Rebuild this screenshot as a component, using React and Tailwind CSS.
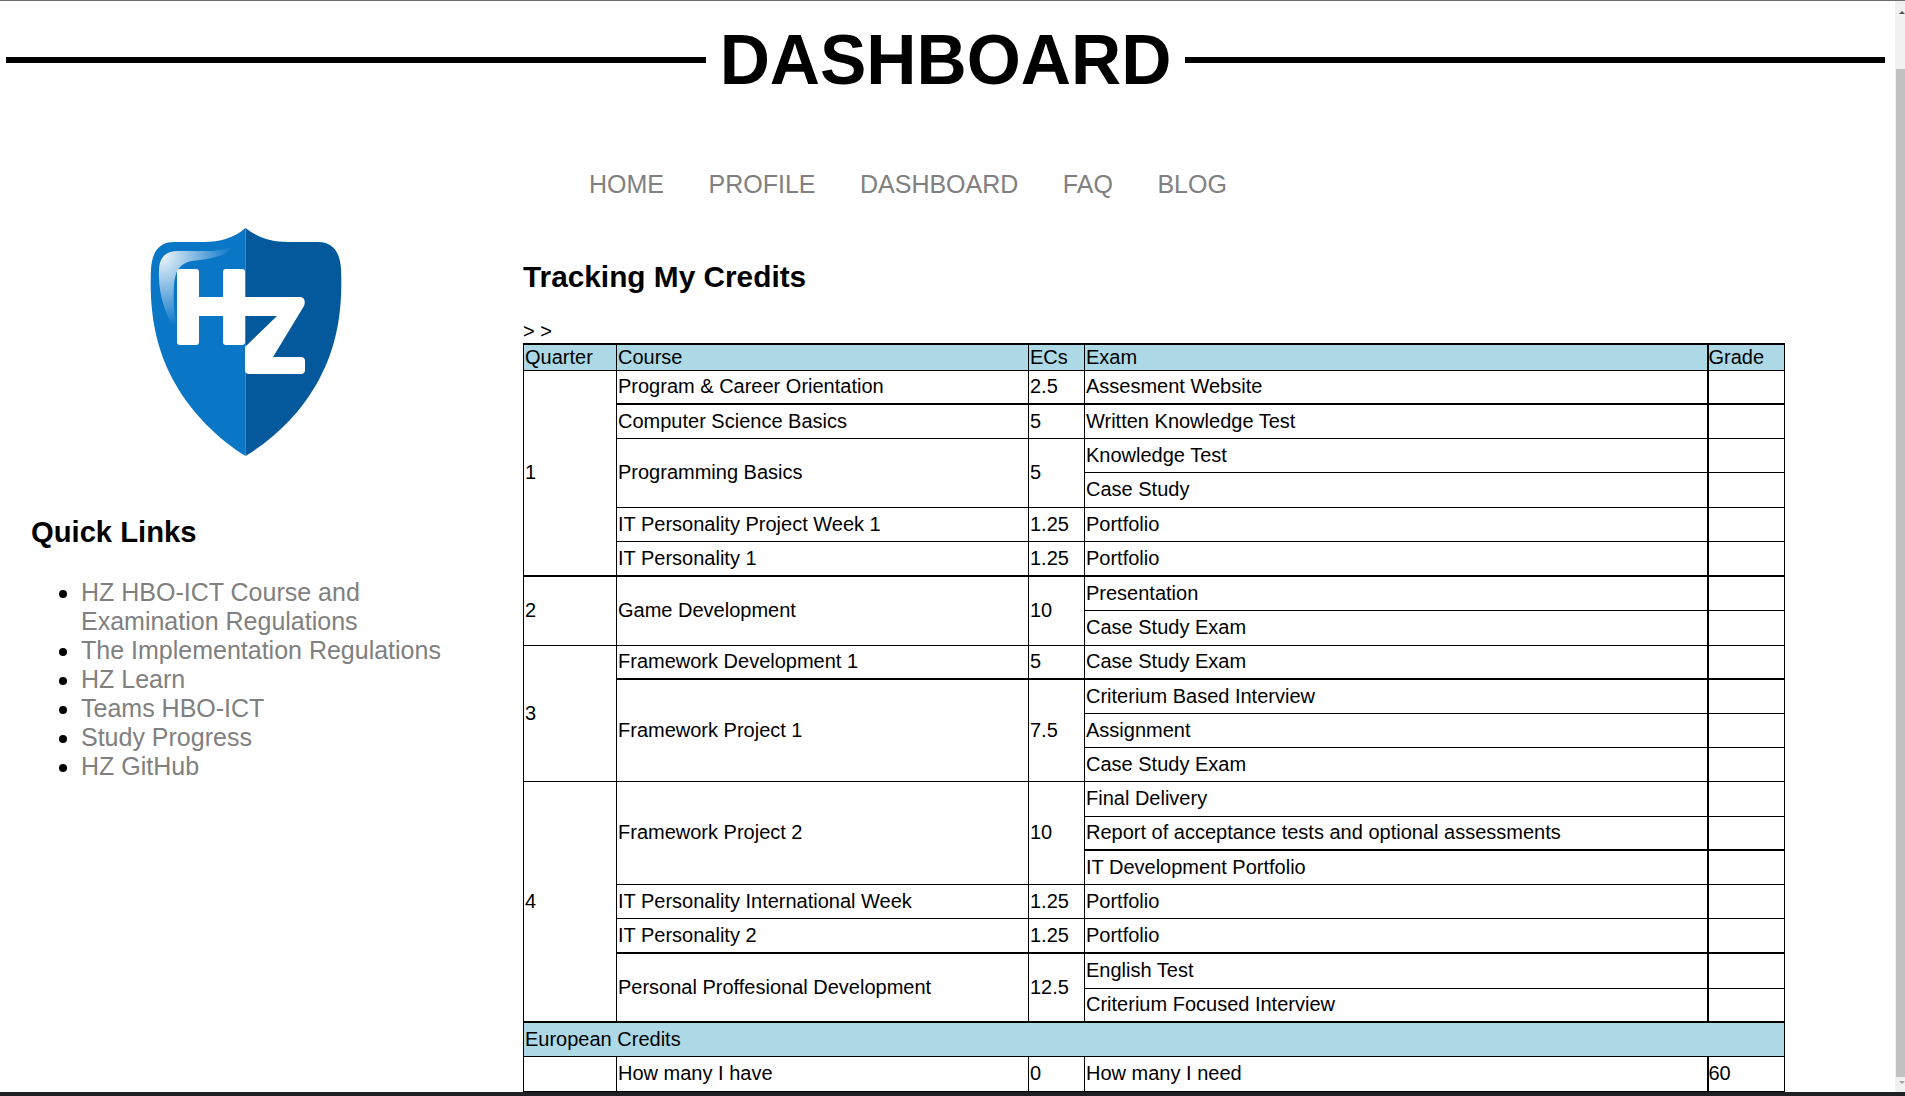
const columns = ['Quarter', 'Course', 'ECs', 'Exam', 'Grade'];

// one entry per table row; quarter/course/ecs only on the row where their rowSpan starts
const rows = [
  { h: 34, quarter: '1', qSpan: 6, course: 'Program & Career Orientation', ecs: '2.5', exam: 'Assesment Website', thick: true },
  { h: 34, course: 'Computer Science Basics', ecs: '5', exam: 'Written Knowledge Test' },
  { h: 34, course: 'Programming Basics', cSpan: 2, ecs: '5', exam: 'Knowledge Test' },
  { h: 35, exam: 'Case Study' },
  { h: 34, course: 'IT Personality Project Week 1', ecs: '1.25', exam: 'Portfolio' },
  { h: 35, course: 'IT Personality 1', ecs: '1.25', exam: 'Portfolio', thick: true },
  { h: 34, quarter: '2', qSpan: 2, course: 'Game Development', cSpan: 2, ecs: '10', exam: 'Presentation' },
  { h: 35, exam: 'Case Study Exam' },
  { h: 34, quarter: '3', qSpan: 4, course: 'Framework Development 1', ecs: '5', exam: 'Case Study Exam', thick: true },
  { h: 34, course: 'Framework Project 1', cSpan: 3, ecs: '7.5', exam: 'Criterium Based Interview' },
  { h: 34, exam: 'Assignment' },
  { h: 34, exam: 'Case Study Exam' },
  { h: 35, quarter: '4', qSpan: 7, course: 'Framework Project 2', cSpan: 3, ecs: '10', exam: 'Final Delivery' },
  { h: 34, exam: 'Report of acceptance tests and optional assessments', thick: true },
  { h: 34, exam: 'IT Development Portfolio' },
  { h: 34, course: 'IT Personality International Week', ecs: '1.25', exam: 'Portfolio' },
  { h: 35, course: 'IT Personality 2', ecs: '1.25', exam: 'Portfolio', thick: true },
  { h: 35, course: 'Personal Proffesional Development', cSpan: 2, ecs: '12.5', exam: 'English Test' },
  { h: 34, exam: 'Criterium Focused Interview', thick: true },
];

const quickLinks = [
  'HZ HBO-ICT Course and Examination Regulations',
  'The Implementation Regulations',
  'HZ Learn',
  'Teams HBO-ICT',
  'Study Progress',
  'HZ GitHub',
];

const navItems = ['HOME', 'PROFILE', 'DASHBOARD', 'FAQ', 'BLOG'];

function Logo() {
  return (
    <svg width="192" height="230" viewBox="0 0 192 230">
      <defs>
        <radialGradient id="gloss" gradientUnits="userSpaceOnUse" cx="10" cy="28" r="72">
          <stop offset="0" stopColor="#ffffff" stopOpacity="0.95" />
          <stop offset="1" stopColor="#ffffff" stopOpacity="0" />
        </radialGradient>
      </defs>
      <path d="M95.5 1C84 11 70 15 54 15H24C10 15 2 24 1 42C-1 86 6 124 26 158C42 186 68 212 95.5 229Z" fill="#0a76c6" />
      <path d="M95.5 1C108 11 122 15 138 15H168C182 15 190 24 191 42C193 86 186 124 166 158C150 186 124 212 95.5 229Z" fill="#03599b" />
      <path d="M9 44C9 31 15 24 28 24H58C70 24 78 22 88 15C78 30 60 32 42 34C30 36 25 44 24 58C23 76 24 90 30 110C16 92 8 68 9 44Z" fill="url(#gloss)" />
      <rect x="27" y="42" width="22" height="76" rx="3" fill="#ffffff" />
      <rect x="73" y="42" width="22" height="76" rx="3" fill="#ffffff" />
      <rect x="45" y="70" width="50" height="19" fill="#ffffff" />
      <path d="M93 70H150C154 70 156 74 154 79L123 130H151C154 130 155 132 155 134V143C155 145 154 147 151 147H99C96 147 95 145 95 143V120L127 89H93Z" fill="#ffffff" />
    </svg>
  );
}

function Cell({ children, thick, rowSpan, colSpan, className = '' }) {
  return (
    <td
      rowSpan={rowSpan}
      colSpan={colSpan}
      className={`border-x border-t border-black px-px py-0 align-middle ${thick ? 'border-b-2' : 'border-b'} ${className}`}
    >
      {children}
    </td>
  );
}

export default function App() {
  return (
    <div className="flex h-screen flex-col overflow-hidden bg-white font-['Liberation_Sans',Arial,sans-serif] text-black">
      <div className="h-px shrink-0 bg-[#6b6b6b]" />
      <div className="flex min-h-0 flex-1">
        <div className="min-w-0 flex-1 overflow-hidden">
          <header className="flex items-center pl-[6px] pr-[10px] pt-[16px]">
            <div className="h-[6px] flex-1 bg-black" />
            <h1 className="px-[14px] text-[69.5px] font-bold leading-[86px]">DASHBOARD</h1>
            <div className="h-[6px] flex-1 bg-black" />
          </header>

          <nav className="mt-[67px] flex gap-[44.5px] pl-[589px] text-[25px] leading-[28px] text-[#808080]">
            {navItems.map((item) => (
              <a key={item}>{item}</a>
            ))}
          </nav>

          <div className="flex">
            <aside className="w-[523px] shrink-0 pl-[31px] pr-[60px] pt-[29px]">
              <div className="flex pl-[119px]">
                <Logo />
              </div>
              <h2 className="mt-[58px] text-[29.2px] font-bold leading-[34px]">Quick Links</h2>
              <ul className="mt-[29px] list-disc pl-[50px] text-[25px] leading-[29px] text-[#808080] marker:text-black">
                {quickLinks.map((link) => (
                  <li key={link}>{link}</li>
                ))}
              </ul>
            </aside>

            <main className="w-[1261px] shrink-0 pt-[62px]">
              <h2 className="text-[29.8px] font-bold leading-[34px]">Tracking My Credits</h2>
              <p className="mt-[25px] text-[20px] leading-[24px]">&gt; &gt;</p>
              <table className="w-[1261px] table-fixed border-collapse text-[20px] leading-[23px]">
                <colgroup>
                  <col className="w-[93px]" />
                  <col className="w-[412px]" />
                  <col className="w-[56px]" />
                  <col className="w-[623px]" />
                  <col className="w-[77px]" />
                </colgroup>
                <thead>
                  <tr className="h-[26px] bg-[#add8e6]">
                    {columns.map((col) => (
                      <th
                        key={col}
                        className={`border border-t-2 border-black px-px py-0 text-left font-normal ${col === 'Grade' ? 'border-l-2 pl-0' : ''}`}
                      >
                        {col}
                      </th>
                    ))}
                  </tr>
                </thead>
                <tbody>
                  {rows.map((row, i) => {
                    const spanThick = (span) => rows[i + (span || 1) - 1].thick;
                    return (
                      <tr key={i} style={{ height: row.h }}>
                        {row.quarter && (
                          <Cell rowSpan={row.qSpan} thick={spanThick(row.qSpan)}>{row.quarter}</Cell>
                        )}
                        {row.course && (
                          <Cell rowSpan={row.cSpan} thick={spanThick(row.cSpan)}>{row.course}</Cell>
                        )}
                        {row.ecs && (
                          <Cell rowSpan={row.cSpan} thick={spanThick(row.cSpan)}>{row.ecs}</Cell>
                        )}
                        <Cell thick={row.thick}>{row.exam}</Cell>
                        <Cell thick={row.thick} className="border-l-2" />
                      </tr>
                    );
                  })}
                  <tr className="h-[34px] bg-[#add8e6]">
                    <td colSpan={5} className="border border-t-2 border-black px-px py-0">European Credits</td>
                  </tr>
                  <tr className="h-[35px]">
                    <td className="border border-black px-px py-0" />
                    <td className="border border-black px-px py-0">How many I have</td>
                    <td className="border border-black px-px py-0">0</td>
                    <td className="border border-black px-px py-0">How many I need</td>
                    <td className="border border-l-2 border-black py-0 pl-0 pr-px">60</td>
                  </tr>
                </tbody>
              </table>
            </main>
          </div>
        </div>

        {/* scrollbar */}
        <div className="flex w-[10px] shrink-0 flex-col items-end bg-[#f1f1f1]">
          <div className="mt-[10px] h-0 w-0 border-x-[3px] border-b-[3px] border-x-transparent border-b-[#505050]" />
          <div className="mt-[55px] h-[1008px] w-[9px] bg-[#c1c1c1]" />
          <div className="mt-[4px] h-0 w-0 border-x-[3px] border-t-[3px] border-x-transparent border-t-[#a3a3a3]" />
        </div>
      </div>
      <div className="h-[4px] shrink-0 bg-[#202124]" />
    </div>
  );
}
